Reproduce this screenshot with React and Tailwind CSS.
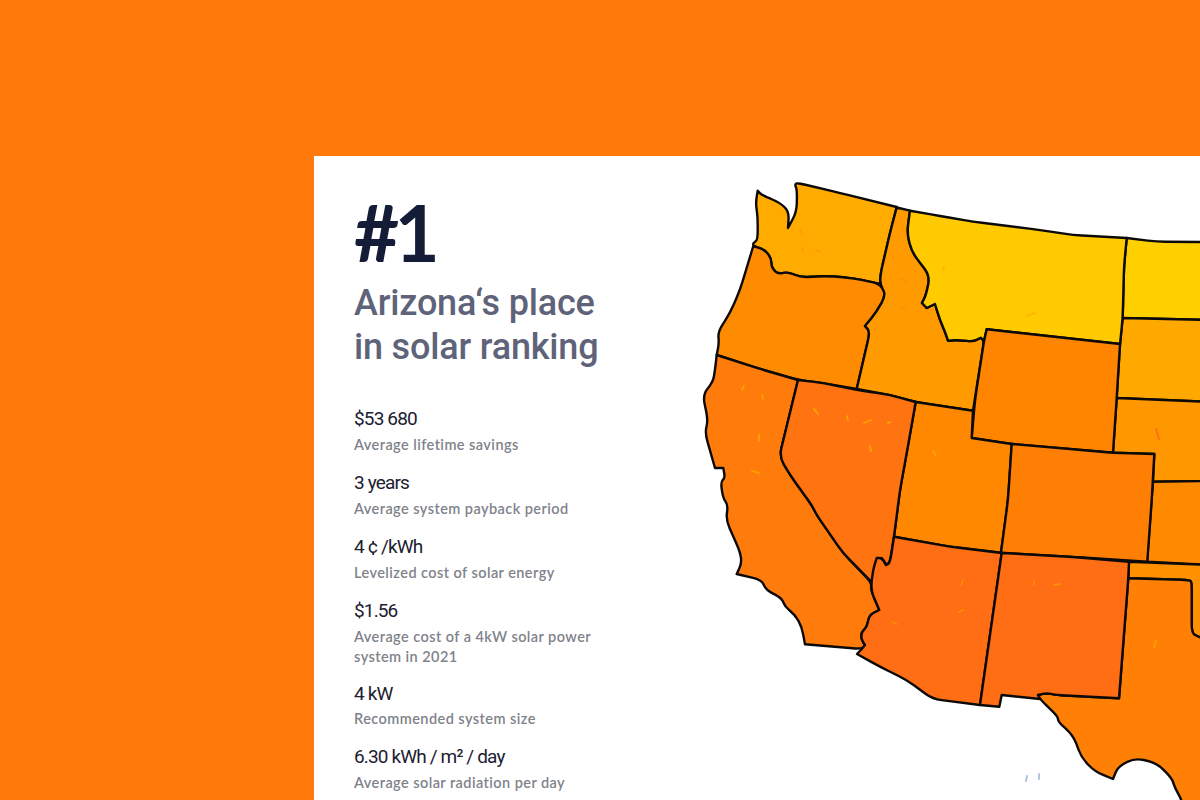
import React from 'react';

const stats = [
  { value: '$53 680', label: 'Average lifetime savings' },
  { value: '3 years', label: 'Average system payback period' },
  { value: '4 ¢ /kWh', label: 'Levelized cost of solar energy' },
  { value: '$1.56', label: 'Average cost of a 4kW solar power system in 2021' },
  { value: '4 kW', label: 'Recommended system size', tight: true },
  { value: '6.30 kWh / m² / day', label: 'Average solar radiation per day' },
];

// map points are in page pixels, see the viewBox on the svg
const states = [
  { name: 'ND', fill: '#ffd000', points: '1126.7,238 1156.7,241.7 1210,242 1210,320 1122.7,318 1124,266.7' },
  { name: 'SD', fill: '#ffa900', points: '1122.7,318 1210,320 1210,402 1116.7,398 1120,344' },
  { name: 'NE', fill: '#ff9700', points: '1116.7,398 1210,402 1210,481 1153,481.7 1154.3,454 1113,452.7' },
  { name: 'KS', fill: '#ff8a00', points: '1153,481.7 1210,481 1210,565 1147,561.7' },
  { name: 'OK', fill: '#ff9000', points: '1129,561.7 1210,565 1210,640 1198,636.7 1191.7,633 1191.7,583 1190,580 1128.3,578.3' },
  { name: 'TX', fill: '#ff8005', points: '1128.3,578.3 1190,580 1191.7,583 1191.7,633 1198,636.7 1210,640 1210,810 1183,810 1181.7,800 1175,788 1171.7,778 1156.7,763 1135,758 1118,766.7 1113,779 1095,771.7 1081.7,758 1073,735 1058,721.7 1058,716.7 1040,699 1038,695 1046.7,693 1056.7,695 1119,698.3' },
  { name: 'WA', fill: '#ffab00', points: '795,185 796.7,182.7 840,193 896.7,207 890,233 880.7,273 880,284 863,280 843,277 823,276 813,277 800,277 788,272 778,274 771.7,268 771,258 765,250 753.3,246 753,243 757.7,240 757.7,216.7 755.7,203 757.7,190.7 761.7,195 780,202.7 789,211.7 788,228 796.7,211.7 797,190' },
  { name: 'OR', fill: '#ff8c00', points: '753.3,246 765,250 771,258 771.7,268 778,274 788,272 800,277 813,277 823,276 843,277 863,280 880,284 886,295 876.7,311.7 865,326 870,331.7 856.7,389 823,383 798,380 756.7,368 716.7,355 719,343 718,331.7 730,313 740,290' },
  { name: 'ID', fill: '#ff9b00', points: '896.7,207.5 910,210.7 907,233 911.7,251.7 930,276 926,295 922,303 926.7,308 935,304 940,320 945,331.7 948,340.7 960,340 973,341.7 980.7,337.7 984,341 973,410.7 915.7,402 890,395 856.7,389 870,331.7 865,326 876.7,311.7 886,295 880,284 880.7,273 890,233' },
  { name: 'MT', fill: '#ffcb00', points: '910,210.7 940,216 973,221.7 1040,230 1073,235 1126.7,238 1124,266.7 1122.7,318 1120,344 986.7,329.3 984,341 980.7,337.7 973,341.7 960,340 948,340.7 945,331.7 940,320 935,304 926.7,308 922,303 926,295 930,276 911.7,251.7 907,233' },
  { name: 'WY', fill: '#ff8400', points: '986.7,329.3 1120,344 1116.7,398 1113,452.7 1011.7,444 971.7,438 975,400 984,341' },
  { name: 'UT', fill: '#ff8800', points: '915.7,402 973,410.7 971.7,438 1011.7,444 1008,500 1001,552.7 950,546.7 894,536.7 900,490 906.7,453' },
  { name: 'CO', fill: '#ff7f05', points: '1011.7,444 1113,452.7 1154.3,454 1151.7,500 1147.3,561.7 1073,557 1001,552.7 1008,500' },
  { name: 'CA', fill: '#ff7c0c', points: '716.7,355 756.7,368 798,380 779.3,456.7 790,475 811.7,505 816.7,515 843,553 871.7,583 870.7,590 879.3,610 869.3,615 867,626.7 861,633 861.7,640 865,645 861.7,649 805,644.3 801.7,626.7 795,615 785,606.7 781.7,598 766,590 761.7,580 736.7,574 741.7,563 740,551.7 726,520 728,505 723,498 720.7,481.7 725,478 723.3,468 715,468 705,433 708,420 702.7,395 713,381.7 715,370' },
  { name: 'NV', fill: '#ff7310', points: '798,380 823,383 856.7,390 890,395 915.7,402 906.7,453 900,490 894,536.7 890,561.7 886.7,565 881.7,558 875,561.7 872.7,583 843,553 816.7,515 811.7,505 790,475 779.3,456.7' },
  { name: 'AZ', fill: '#ff6d14', points: '894,536.7 950,546.7 1001.7,553 980,705 932.7,699 906.7,680 880,666.7 857,654 861.7,649 865,645 861.7,640 861,633 867,626.7 869.3,615 879.3,610 870.7,590 873,570 876.7,558 881.7,558 886,565 890,563' },
  { name: 'NM', fill: '#ff6d14', points: '1001.7,553 1073,557 1129,561.7 1128.3,578.3 1119,698.3 1056.7,695 1046.7,693 1038,695 1040,699 1001.7,695 999.3,706.7 980,705' },
];

const dashes = [
  { d: 'M801 230l1 5', stroke: '#ff9c00' },
  { d: 'M802 252l1-4', stroke: '#ff9c00' },
  { d: 'M820 252l-4-2', stroke: '#ff9c00' },
  { d: 'M900 279l6 2', stroke: '#ff8f00' },
  { d: 'M901 310l5-4', stroke: '#ff8f00' },
  { d: 'M1027 316l8-3', stroke: '#ffb000' },
  { d: 'M943 270l1-3', stroke: '#ffb000' },
  { d: 'M742 390l2-4', stroke: '#ffa300' },
  { d: 'M763 399l-1-4', stroke: '#ffa300' },
  { d: 'M759 441v-6', stroke: '#ffa300' },
  { d: 'M752 471l7 2', stroke: '#ffa300' },
  { d: 'M814 409l4 5', stroke: '#ffa300' },
  { d: 'M847 416l1 4', stroke: '#ffa300' },
  { d: 'M864 423l7-3', stroke: '#ffa300' },
  { d: 'M888 423l2-1', stroke: '#ffa300' },
  { d: 'M870 446l1 5', stroke: '#ffa300' },
  { d: 'M933 451l3 5', stroke: '#ffa300' },
  { d: 'M1156 429l3 10', stroke: '#ff6d14' },
  { d: 'M961 585l2-5', stroke: '#ff8a08' },
  { d: 'M959 612l4-2', stroke: '#ff9400' },
  { d: 'M892 622l5 2', stroke: '#ff8a08' },
  { d: 'M1034 585v-5', stroke: '#ff8a08' },
  { d: 'M1054 585l6-1', stroke: '#ff8f08' },
  { d: 'M1154 647l2-6', stroke: '#ff9c00' },
  { d: 'M1026 781l1-5', stroke: '#a9c0dc' },
  { d: 'M1039 779v-5', stroke: '#a9c0dc' },
];

// rounds the small wiggles of a border, real corners stay sharp
const smoothPath = (points) => {
  const pts = points.split(' ').map((p) => p.split(',').map(Number));
  const n = pts.length;
  let d = '';
  pts.forEach((p, i) => {
    const a = pts[(i - 1 + n) % n];
    const b = pts[(i + 1) % n];
    const la = Math.hypot(p[0] - a[0], p[1] - a[1]);
    const lb = Math.hypot(b[0] - p[0], b[1] - p[1]);
    const cos = ((p[0] - a[0]) * (b[0] - p[0]) + (p[1] - a[1]) * (b[1] - p[1])) / (la * lb);
    if (cos < 0.35) {
      d += `${i === 0 ? 'M' : 'L'}${p[0]} ${p[1]}`;
      return;
    }
    const ca = Math.min(la * 0.45, 9) / la;
    const cb = Math.min(lb * 0.45, 9) / lb;
    const sx = p[0] + (a[0] - p[0]) * ca;
    const sy = p[1] + (a[1] - p[1]) * ca;
    const ex = p[0] + (b[0] - p[0]) * cb;
    const ey = p[1] + (b[1] - p[1]) * cb;
    d += `${i === 0 ? 'M' : 'L'}${sx} ${sy}Q${p[0]} ${p[1]} ${ex} ${ey}`;
  });
  return d + 'Z';
};

const StateMap = () => (
  <svg viewBox="700 156 500 644" className="w-[500px] h-[644px] shrink-0">
    {states.map((state) => (
      <path
        key={state.name}
        d={smoothPath(state.points)}
        fill={state.fill}
        stroke="#0c0a08"
        strokeWidth="2.4"
        strokeLinejoin="round"
      />
    ))}
    {dashes.map((dash) => (
      <path key={dash.d} d={dash.d} stroke={dash.stroke} strokeWidth="1.8" strokeLinecap="round" fill="none" />
    ))}
  </svg>
);

export default function App() {
  return (
    <div className="h-[800px] overflow-hidden bg-[#ff7a0b] pt-[156px] pl-[314px]">
      <div className="flex h-[644px] bg-white">
        <div className="w-[386px] shrink-0 pl-10 pt-9">
          <h1 className="text-[78px] leading-[80px] font-bold tracking-[-0.06em] text-[#141c38] font-['Lato',sans-serif]">#1</h1>
          <h2 className="mt-[9px] mb-[34px] text-[36px] leading-[44px] font-medium tracking-[-0.005em] text-[#5f6379] font-['Roboto',sans-serif]">
            Arizona‘s place
            <br />
            in solar ranking
          </h2>
          <div className="flex flex-col gap-3">
            {stats.map((stat) => (
              <div key={stat.value} className="w-[250px]">
                <div className={`text-[19px] font-normal text-[#1c2030] tracking-[-0.045em] font-['Roboto',sans-serif] ${stat.tight ? 'leading-[30px]' : 'leading-8'}`}>{stat.value}</div>
                <div className="text-[14.5px] leading-5 font-semibold tracking-[0.03em] text-[#80838b] font-['Lato',sans-serif]">{stat.label}</div>
              </div>
            ))}
          </div>
        </div>
        <StateMap />
      </div>
    </div>
  );
}
